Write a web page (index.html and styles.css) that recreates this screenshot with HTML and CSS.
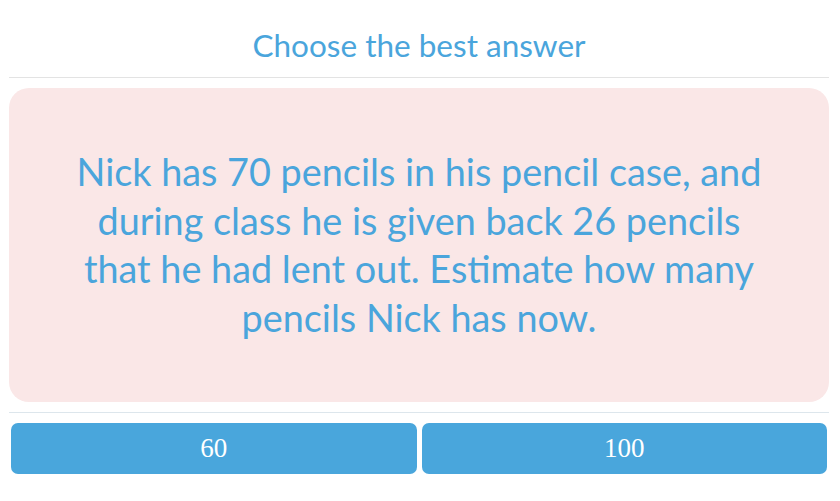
FILE: index.html
```html
<!DOCTYPE html>
<html lang="en">
<head>
    <meta charset="UTF-8">
    <meta name="viewport" content="width=device-width, initial-scale=1.0">
    <title>Quiz</title>
    <link rel="stylesheet" href="styles.css">
</head>
<body>
    <div class="quiz">
        <h2 class="quiz-title">Choose the best answer</h2>
        <div class="question-card">
            <p>Nick has 70 pencils in his pencil case, and during class he is given back 26 pencils that he had lent out. Estimate how many pencils Nick has now.</p>
        </div>
        <div class="answers">
            <button type="button">60</button>
            <button type="button">100</button>
        </div>
    </div>
</body>
</html>
```

FILE: styles.css
```css
body {
    margin: 0;
    background: #ffffff;
    font-family: 'Lato', 'Open Sans', sans-serif;
}

.quiz {
    width: 820px;
    margin-left: 9px;
}

.quiz-title {
    margin: 0;
    height: 78px;
    display: flex;
    align-items: center;
    justify-content: center;
    padding-top: 12px;
    box-sizing: border-box;
    font-size: 31.5px;
    font-weight: normal;
    color: #4aa5dc;
    border-bottom: 1px solid #e3e3e3;
}

.question-card {
    margin-top: 10px;
    height: 314px;
    background: #fae7e7;
    border-radius: 20px;
    display: flex;
    align-items: center;
    justify-content: center;
    padding: 0 20px;
    box-sizing: border-box;
}

.question-card p {
    margin: 0;
    max-width: 700px;
    text-align: center;
    font-size: 37.8px;
    line-height: 48.5px;
    color: #4aa5dc;
}

.answers {
    margin-top: 10px;
    border-top: 1px solid #dde6ec;
    padding: 10px 2px 0;
    display: flex;
    gap: 5px;
}

.answers button {
    flex: 1;
    height: 51px;
    border: none;
    border-radius: 7px;
    background-color: #49a6dc;
    color: #ffffff;
    font-family: 'Liberation Serif', serif;
    font-size: 27px;
    cursor: pointer;
}
```
